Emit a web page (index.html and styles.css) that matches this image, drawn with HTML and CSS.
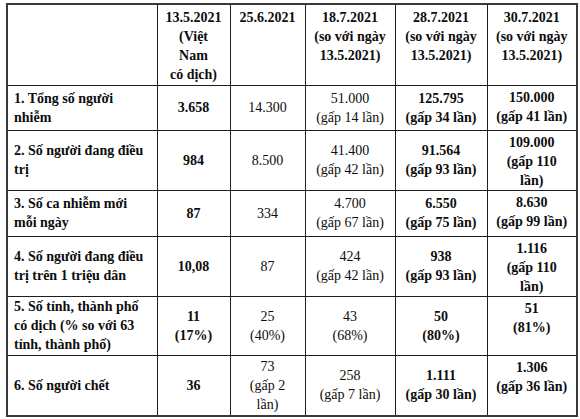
FILE: index.html
```html
<!DOCTYPE html>
<html lang="vi">
<head>
<meta charset="utf-8">
<title>Bảng so sánh</title>
<link rel="stylesheet" href="styles.css">
</head>
<body>
<table class="stats">
  <colgroup>
    <col class="c1"><col class="c2"><col class="c3"><col class="c4"><col class="c5"><col class="c6">
  </colgroup>
  <tr class="r-head">
    <td class="label"></td>
    <td class="b">13.5.2021<br>(Việt<br>Nam<br>có dịch)</td>
    <td class="b">25.6.2021</td>
    <td class="b">18.7.2021<br>(so với ngày<br>13.5.2021)</td>
    <td class="b">28.7.2021<br>(so với ngày<br>13.5.2021)</td>
    <td class="b">30.7.2021<br>(so với ngày<br>13.5.2021)</td>
  </tr>
  <tr class="r1">
    <td class="label">1. Tổng số người<br>nhiễm</td>
    <td class="b">3.658</td>
    <td>14.300</td>
    <td>51.000<br>(gấp 14 lần)</td>
    <td class="b">125.795<br>(gấp 34 lần)</td>
    <td class="b top">150.000<br>(gấp 41 lần)</td>
  </tr>
  <tr class="r2">
    <td class="label">2. Số người đang điều<br>trị</td>
    <td class="b">984</td>
    <td>8.500</td>
    <td>41.400<br>(gấp 42 lần)</td>
    <td class="b">91.564<br>(gấp 93 lần)</td>
    <td class="b top">109.000<br>(gấp 110<br>lần)</td>
  </tr>
  <tr class="r3">
    <td class="label">3. Số ca nhiễm mới<br>mỗi ngày</td>
    <td class="b">87</td>
    <td>334</td>
    <td>4.700<br>(gấp 67 lần)</td>
    <td class="b">6.550<br>(gấp 75 lần)</td>
    <td class="b top">8.630<br>(gấp 99 lần)</td>
  </tr>
  <tr class="r4">
    <td class="label">4. Số người đang điều<br>trị trên 1 triệu dân</td>
    <td class="b">10,08</td>
    <td>87</td>
    <td>424<br>(gấp 42 lần)</td>
    <td class="b">938<br>(gấp 93 lần)</td>
    <td class="b top">1.116<br>(gấp 110<br>lần)</td>
  </tr>
  <tr class="r5">
    <td class="label">5. Số tỉnh, thành phố<br>có dịch (% so với 63<br>tỉnh, thành phố)</td>
    <td class="b">11<br>(17%)</td>
    <td>25<br>(40%)</td>
    <td>43<br>(68%)</td>
    <td class="b">50<br>(80%)</td>
    <td class="b top">51<br>(81%)</td>
  </tr>
  <tr class="r6">
    <td class="label">6. Số người chết</td>
    <td class="b">36</td>
    <td>73<br>(gấp 2<br>lần)</td>
    <td>258<br>(gấp 7 lần)</td>
    <td class="b">1.111<br>(gấp 30 lần)</td>
    <td class="b top">1.306<br>(gấp 36 lần)</td>
  </tr>
</table>
</body>
</html>
```

FILE: styles.css
```css
html, body {
  margin: 0;
  padding: 0;
  background: #ffffff;
}

body {
  font-family: "Liberation Serif", "Times New Roman", serif;
  font-size: 14px;
  line-height: 19px;
  color: #0d0d0d;
}

.stats {
  margin: 3px 0 0 6px;
  width: 570px;
  height: 412px;
  table-layout: fixed;
  border-collapse: collapse;
  border: 2px solid #3a3a3a;
}

.c1 { width: 150px; }
.c2 { width: 73px; }
.c3 { width: 75px; }
.c4 { width: 90px; }
.c5 { width: 92px; }
.c6 { width: 90px; }

.stats td {
  border: 1px solid #1e1e1e;
  padding: 0 2px;
  text-align: center;
  vertical-align: middle;
  font-weight: normal;
  white-space: nowrap;
}

.stats td.b { font-weight: bold; }

.stats td.label {
  text-align: left;
  font-weight: bold;
  padding-left: 6px;
}

.stats td.top {
  vertical-align: top;
  padding-top: 2px;
}

.r-head { height: 81px; }
.r-head td {
  vertical-align: top;
  padding-top: 3px;
}
.r1 { height: 45px; }
.r2 { height: 60px; }
.r3 { height: 46px; }
.r4 { height: 60px; }
.r5 { height: 59px; }
.r6 { height: 61px; }
```
